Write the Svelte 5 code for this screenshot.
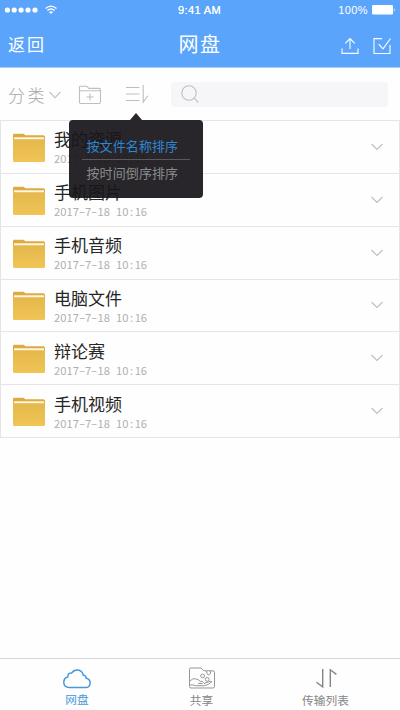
<script>
  const files = ['我的资源', '手机图片', '手机音频', '电脑文件', '辩论赛', '手机视频'];
  const date = '2017-7-18 10:16';
  const parts = date.split(/([-: ])/);
</script>

<div class="app">
  <header>
    <div class="status">
      <svg class="signal" width="60" height="14" viewBox="0 0 60 14">
        <g fill="#fff">
          {#each [7.4, 14.2, 21.1, 28, 35] as x}
            <circle cx={x} cy="7" r="2.6" />
          {/each}
          <path d="M51 11 L48.9 9 Q51 7.4 53.1 9 Z" />
        </g>
        <g fill="none" stroke="#fff" stroke-width="1.3">
          <path d="M47.4 7.5 Q51 4.5 54.6 7.5" />
          <path d="M45.5 5.5 Q51 .8 56.5 5.5" />
        </g>
      </svg>
      <span class="time">9:41 AM</span>
      <span class="battery">
        <span>100%</span>
        <svg width="25" height="12" viewBox="0 0 25 12">
          <rect x="1" y="1" width="21" height="9.6" rx="1.4" fill="#fff" />
          <path d="M22.8 4 Q24.6 6 22.8 8 Z" fill="#fff" />
        </svg>
      </span>
    </div>
    <div class="nav">
      <span class="back">返回</span>
      <h1>网盘</h1>
      <span class="actions">
        <svg width="18" height="18" viewBox="0 0 18 18">
          <path d="M9 12 V2 M4.3 6.4 L9 1.6 L13.7 6.4 M1 11.5 V16.4 H17 V11.5" />
        </svg>
        <svg width="18" height="18" viewBox="0 0 18 18">
          <path d="M9 1.6 H1 V16.5 H17 V8 M5.7 7.2 L10 11.8 L17.5 1.5" />
        </svg>
      </span>
    </div>
  </header>

  <div class="toolbar">
    <span class="category">分类</span>
    <svg class="caret" width="14" height="10" viewBox="0 0 14 10"><path d="M1.5 2 L7 7.8 L12.5 2" /></svg>
    <svg class="add" width="24" height="20" viewBox="0 0 24 20">
      <path d="M1.5 18 V2 Q1.5 1.2 2.3 1.2 H8.8 L10.8 3.4 H20.8 Q22.5 3.4 22.5 5 V17 Q22.5 18.5 21 18.5 H2.8 Q1.5 18.5 1.5 17 M1.5 5.8 H22.5 M12 8.5 V15.5 M8.4 12 H15.6" />
    </svg>
    <div class="sort">
      <svg width="26" height="22" viewBox="0 0 26 22">
        <path d="M1 4.5 H14.5 M1 11 H14.5 M1 17.5 H14.5 M18.2 2 V19.2 L22.8 12.8" />
      </svg>
      <div class="menu">
        <span class="chosen">按文件名称排序</span>
        <span>按时间倒序排序</span>
      </div>
    </div>
    <div class="search">
      <svg width="20" height="20" viewBox="0 0 20 20"><circle cx="9" cy="9" r="7.2" /><path d="M14.2 14.2 L18.4 18.5" /></svg>
    </div>
  </div>

  <ul>
    {#each files as name}
      <li>
        <svg class="folder" width="34" height="30" viewBox="0 0 34 30">
          <defs>
            <linearGradient id="paper" x2="0" y2="1">
              <stop offset="0" stop-color="#e5b84d" /><stop offset="1" stop-color="#f0c455" />
            </linearGradient>
          </defs>
          <path d="M1 5 V2 Q1 .8 2.2 .8 H11 Q12 .8 12.6 1.5 L13.3 2.2 H31.5 Q33 2.2 33 4 V8 H1 Z" fill="#dcab43" />
          <rect x="2" y="4.3" width="30" height="2.6" fill="#fff7df" />
          <path d="M1 6.2 H33 V27.5 Q33 29 31.5 29 H2.5 Q1 29 1 27.5 Z" fill="url(#paper)" />
        </svg>
        <div class="info">
          <span class="name">{name}</span>
          <span class="date">{#each parts as p}{#if /[-: ]/.test(p)}<i class:dash={p === '-'}>{p}</i>{:else}{p}{/if}{/each}</span>
        </div>
        <svg class="more" width="14" height="10" viewBox="0 0 14 10"><path d="M1.5 2 L7 7.5 L12.5 2" /></svg>
      </li>
    {/each}
  </ul>

  <nav>
    <span class="tab active">
      <svg width="30" height="22" viewBox="0 0 30 22">
        <path d="M7.2 19.6 Q1.8 19.3 1.8 14.3 Q1.8 10 5.8 9 Q5.7 4.7 9.7 4.9 Q11.5 1.8 15.5 1.9 Q20.4 2.4 21.2 7 Q24 7.4 24.3 10.3 Q28.2 11.2 28.2 15 Q28 19.6 23.3 19.6 Z" fill="none" stroke="#4a98dc" stroke-width="1.5" />
      </svg>
      网盘
    </span>
    <span class="tab">
      <svg width="28" height="22" viewBox="0 0 28 22" fill="none" stroke="#969696" stroke-width="1">
        <path d="M2.5 1 H13 L16 3.8 H25 Q26.5 3.8 26.5 5.2 V19.5 Q26.5 21 25 21 H3 Q1.5 21 1.5 19.5 V2.2 Q1.5 1 2.5 1" />
        <path d="M18.6 4 Q18.3 7.8 20.8 7.8 Q23.1 7.6 22.6 4" />
        <circle cx="14.6" cy="9" r="1.9" /><circle cx="19.2" cy="12.4" r="1.9" />
        <path d="M2 14 Q4.5 11 7.5 11.8 Q10.5 12.4 12.3 14.4 H14.6 Q16.6 15.4 14.6 16.4 H10 M2 18 Q5 17.4 7.5 18.7 H16.5 Q20 18.3 24 14.6 Q22.4 13.9 20.4 14.9 L16 16.6" />
      </svg>
      共享
    </span>
    <span class="tab transfer">
      <svg width="24" height="22" viewBox="0 0 24 22" fill="none" stroke="#858585" stroke-width="1.4">
        <path d="M2.4 15.2 L8.7 19.8 V2 M16.3 20 V2.8 L22.4 7.4" />
      </svg>
      传输列表
    </span>
  </nav>
</div>

<style>
  :global(body) { margin: 0; }
  .app {
    height: 710px;
    width: 400px;
    display: flex;
    flex-direction: column;
    background: #fefefe;
    font-family: 'Liberation Sans', 'Noto Sans CJK SC', sans-serif;
    overflow: hidden;
  }
  svg { display: block; flex: none; }
  header { height: 67px; background: #5aa5fb; border-bottom: 1px solid #a9cdf5; color: #fff; flex: none; }
  .status { height: 20px; display: grid; grid-template-columns: 1fr auto 1fr; align-items: center; font-size: 11px; line-height: 20px; }
  .signal { margin-top: -1px; }
  .time { font-size: 11px; letter-spacing: .35px; margin-left: -1px; text-shadow: 0 0 .5px #fff; }
  .battery { display: flex; justify-content: flex-end; align-items: center; gap: 3px; padding-right: 4px; letter-spacing: .4px; }
  .nav { height: 47px; display: grid; grid-template-columns: 1fr auto 1fr; align-items: center; padding: 4px 9px 0 8px; box-sizing: border-box; }
  .back { font-size: 17px; letter-spacing: 2px; line-height: 43px; }
  h1 { margin: 0; font-size: 20px; font-weight: 400; letter-spacing: 1.6px; line-height: 43px; padding-left: 1px; }
  .actions { display: flex; justify-content: flex-end; gap: 14px; }
  .actions svg { fill: none; stroke: #fff; stroke-width: 1.1; }
  .toolbar { height: 52px; flex: none; display: flex; align-items: center; padding: 0 12px 0 8px; }
  .toolbar svg, .more { fill: none; stroke: #bfbfc1; stroke-width: 1.1; }
  .category { font-size: 17px; letter-spacing: 2.4px; color: #a5a5a5; width: 39px; font-weight: 300; }
  .caret { margin: 2px 0 0 1px; }
  .add { margin: 2px 23px 0 16px; }
  .sort { position: relative; width: 46px; }
  .menu {
    position: absolute;
    left: -56px;
    top: 37px;
    width: 134px;
    height: 78px;
    box-sizing: border-box;
    padding: 14px 13px 0;
    border-radius: 4px;
    background: rgba(24, 21, 26, .93);
    z-index: 2;
    display: flex;
    flex-direction: column;
    color: #8b8b8d;
    font-size: 13px;
    letter-spacing: .1px;
    line-height: 25px;
    white-space: nowrap;
  }
  .menu::before {
    content: '';
    position: absolute;
    left: 61px;
    top: -7px;
    border: 6px solid transparent;
    border-top: 0;
    border-bottom: 7px solid #29272a;
  }
  .menu span { padding-left: 4.5px; line-height: 27px; }
  .menu .chosen { color: #2e86d4; border-bottom: 1px solid #5b5957; line-height: 25px; }
  .search { flex: 1; height: 25px; border-radius: 4px; background: #f6f5f8; display: flex; align-items: center; padding-left: 9px; }
  ul { list-style: none; margin: 0; padding: 0; border: 1px solid #e5e5e6; }
  li { height: 51.85px; border-bottom: 1px solid #e5e5e6; display: flex; align-items: center; padding: 0 15px 0 11px; }
  li:last-child { border-bottom: 0; }
  .folder { margin-top: 2px; }
  .info { flex: 1; padding: 2px 0 0 8px; display: flex; flex-direction: column; }
  .name { font-size: 17px; line-height: 22px; color: #262626; }
  .date { font-family: 'Noto Sans CJK SC', sans-serif; font-size: 11.2px; line-height: 14px; margin-top: -1px; color: #b0b0b2; white-space: pre; }
  .date i { font-style: normal; display: inline-block; width: 6.2px; text-align: center; }
  .date .dash { transform: scaleX(1.6); }
  nav { margin-top: auto; height: 51px; flex: none; border-top: 1px solid #d8d8d8; display: grid; grid-template-columns: 154px 95px 151px; }
  .tab { display: flex; flex-direction: column; align-items: center; padding-top: 8px; color: #858585; font-size: 11.7px; line-height: 23px; }
  .active { color: #4a98dc; padding-top: 9px; line-height: 20px; }
  .transfer { padding-left: 2px; }
</style>
